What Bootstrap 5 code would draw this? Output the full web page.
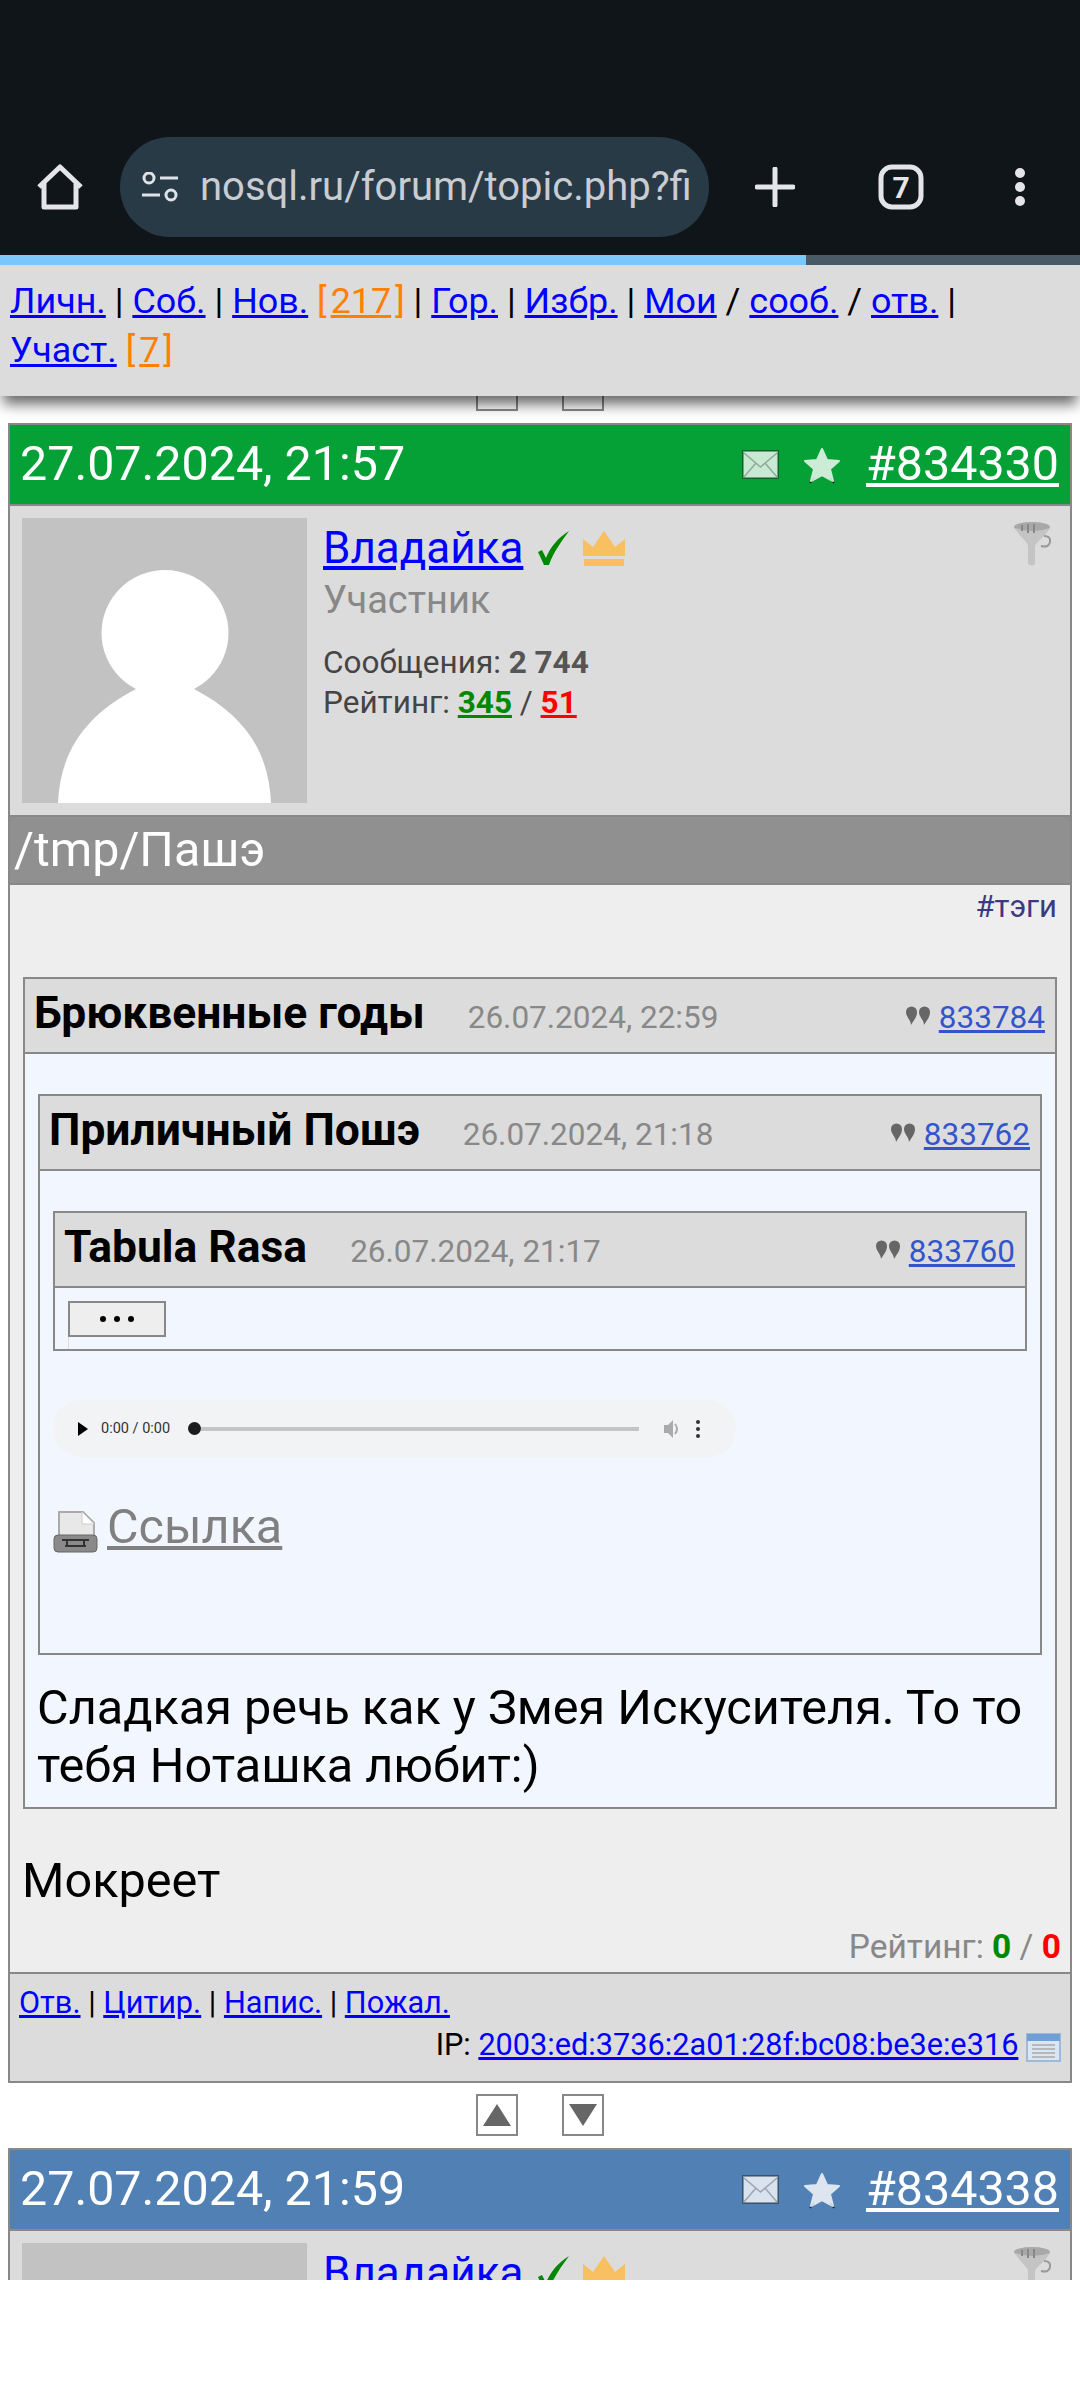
<!DOCTYPE html>
<html lang="ru">
<head>
  <meta charset="UTF-8">
  <title>nosql.ru forum</title>
  <link href="https://cdn.jsdelivr.net/npm/bootstrap@5.3.2/dist/css/bootstrap.min.css" rel="stylesheet">
  <style>
    body { background: #fff; font-family: Roboto, "Liberation Sans", sans-serif; color: #000; }
    a { color: #00f; }
    .page-clip { height: 2280px; overflow: hidden; }

    .chrome-bar { height: 255px; background: #0f1518; padding: 137px 0 18px 37px; }
    .url-pill { width: 589px; height: 100px; margin-left: 37px; background: #293a47; border-radius: 50px; padding: 0 19px 0 22px; color: #c9cdd2; font-size: 40px; flex: none; }
    .url-text { white-space: nowrap; overflow: hidden; width: 490px; margin-left: 22px; }
    .plus-gap { margin-left: 46px; }
    .tabs-gap { margin-left: 83px; }
    .dots-gap { margin-left: 90px; }
    .load-track { height: 10px; background: #4b5a67; }
    .load-fill { width: 806px; height: 10px; background: #7cc8fc; }

    .top-nav { position: relative; z-index: 5; background: #dcdcdc; font-size: 35.9px; line-height: 49px; padding: 12px 10px 21px; box-shadow: 0 11px 13px -3px rgba(0,0,0,.6); }
    .top-nav span { color: #ff8000; }
    .top-nav span a { color: #ff8000; margin: 0 4px; }

    .arrow-row { gap: 44px; margin: 11px 0 12px; }
    .arrow-row.first-row { margin-top: -27px; }
    .arrow-btn { width: 42px; height: 42px; border: 2px solid #888; background: #fff; }

    .post-box { margin: 0 8px; border: 2px solid #888; }
    .post-head { height: 81px; border-bottom: 2px solid #888; color: #fff; font-size: 48.4px; padding: 0 11px 0 10px; }
    .post-head a { color: #fff; margin-left: 25px; }
    .head-green { background: #05a036; }
    .head-blue { background: #5080b4; }
    .post-author { height: 311px; background: #dcdcdc; border-bottom: 2px solid #888; padding: 12px; position: relative; }
    .author-info { margin-left: 16px; }
    .author-name { font-size: 44px; line-height: 50px; margin-top: 5px; }
    .tick-icon { margin-left: 6px; }
    .crown-icon { margin-left: 3px; }
    .author-role { font-size: 38px; line-height: 46px; color: #888; margin-top: 4px; margin-bottom: 20px; }
    .author-stat { font-size: 31.5px; line-height: 40px; color: #444; }
    .author-stat b { color: #555; }
    .rate-up { color: #080; font-weight: 700; }
    .rate-down { color: #f00; font-weight: 700; }
    .funnel-icon { position: absolute; right: 18px; top: 16px; }
    .post-subject { line-height: 66px; background: #909090; border-bottom: 2px solid #888; color: #fff; font-size: 48.4px; padding-left: 4px; box-sizing: content-box; height: 66px; }
    .post-text { background: #eee; border-bottom: 2px solid #888; padding: 4px 13px 5px; }
    .tag-line { text-align: right; font-size: 31px; line-height: 36px; margin-bottom: 52px; color: #3a3a80; }
    .body-line { font-size: 48.6px; line-height: 58px; margin: 43px 0 0 -1px; }
    .rate-line { text-align: right; font-size: 33.5px; line-height: 40px; color: #888; margin: 17px -4px 0 0; }

    .quote-box { border: 2px solid #888; background: #f2f7ff; }
    .quote-head { height: 75px; background: #dcdcdc; border-bottom: 2px solid #888; padding: 8px 10px 0 9px; line-height: 1.2; }
    .quote-name { font-size: 44.4px; font-weight: 700; margin-right: 43px; }
    .quote-date { font-size: 31.5px; color: #888; }
    .quote-ref { font-size: 31.5px; color: #3355cc; margin-left: 8px; }
    .quote-sign { margin-left: auto; align-self: center; margin-top: -4px; }
    .quote-pad { padding: 40px 13px 0; }
    .quote-cut { height: 61px; overflow: hidden; padding: 13px 13px 0; }
    .more-btn { width: 98px; height: 36px; border: 2px solid #888; background: #eee; gap: 8px; }
    .more-btn i { width: 6px; height: 6px; border-radius: 50%; background: #000; }
    .more-tail { width: 1px; height: 12px; background: #ddd; }

    .audio-bar { width: 683px; height: 57px; margin-top: 49px; background: #f1f3f4; border-radius: 29px; padding: 0 26px 0 24px; }
    .audio-time { font-size: 14.5px; color: #333; margin: 0 18px 0 12px; white-space: nowrap; }
    .audio-thumb { width: 13px; height: 13px; border-radius: 50%; background: #1c1c1c; flex: none; }
    .audio-track { width: 438px; height: 4px; background: #c4c4c4; margin-right: 25px; flex: none; }
    .file-link { font-size: 48.5px; line-height: 56px; margin-top: 42px; padding-bottom: 98px; }
    .file-link a { color: #808080; margin-left: 9px; }
    .file-link svg { vertical-align: -10px; }
    .quote-tail { font-size: 48.6px; line-height: 58px; padding: 24px 0 12px; margin: 0 -10px 0 -1px; }

    .post-foot { background: #dcdcdc; font-size: 30.7px; line-height: 42px; padding: 8px 9px 15px; }
    .ip-line { text-align: right; }
    .ip-line svg { vertical-align: -7px; }
  </style>
</head>
<body>

<svg width="0" height="0" class="d-block">
  <defs>
    <symbol id="ic-mail" viewBox="0 0 37 29">
      <rect x="1" y="1" width="35" height="27" fill="#fff" fill-opacity=".78" stroke="#000" stroke-opacity=".35" stroke-width="2"/>
      <path d="M2 3 18.500 17 35 3M2 27 14 13M35 27 23 13" fill="none" stroke="#000" stroke-opacity=".28" stroke-width="1.500"/>
    </symbol>
    <symbol id="ic-star" viewBox="0 0 38 38">
      <path d="M7 37 11 32M31 37 27 32" stroke="#000" stroke-opacity=".7" stroke-width="2"/>
      <path d="M19 3 24 14 36 15 27 23 30 35 19 29 8 35 11 23 2 15 14 14Z" fill="#fff" stroke="#fff" stroke-width="2" stroke-linejoin="round" opacity=".8"/>
    </symbol>
    <symbol id="ic-funnel" viewBox="0 0 38 44">
      <ellipse cx="18" cy="5" rx="18" ry="5" fill="#a8a8a8"/>
      <path d="M1 6C6 16 13 19 14 24V42Q18 45 21 42V24C23 19 30 16 36 6Q18 12 1 6Z" fill="#c4c4c4"/>
      <path d="M8 3V9M14 2V11M20 2V11" stroke="#888" stroke-width="2"/>
      <path d="M30 14Q37 14 36 20 35 26 27 24" fill="none" stroke="#999" stroke-width="2"/>
    </symbol>
    <symbol id="ic-avatar" viewBox="0 0 285 285">
      <rect width="285" height="285" fill="#c2c2c2"/>
      <path d="M36 285C38 235 62 198 114 171H172C224 198 247 235 249 285Z" fill="#fff"/>
      <ellipse cx="143" cy="115" rx="63.500" ry="63" fill="#fff"/>
    </symbol>
    <symbol id="ic-check" viewBox="0 0 34 34">
      <path d="M1 21 5 19 9 27C13 16 22 6 32 0 24 11 16 22 12 34H7Z" fill="#080"/>
    </symbol>
    <symbol id="ic-crown" viewBox="0 0 44 35">
      <path d="M1 8 11 16 22 0 33 16 43 8V25H1Z" fill="#f8c060"/>
      <rect x="2" y="28" width="40" height="7" fill="#f8c060"/>
    </symbol>
    <symbol id="ic-quote" viewBox="0 0 26 24">
      <path d="M0 22 14 2M6 24 20 4M12 24 26 4" stroke="#ddd" stroke-width="1.500"/>
      <path d="M1 6A5.500 5.500 0 0 1 12 6C12 11 9 14 6 19 6 14 1 11 1 6ZM14 6A5.500 5.500 0 0 1 25 6C25 11 22 14 19 19 19 14 14 11 14 6Z" fill="#666"/>
    </symbol>
  </defs>
</svg>

<div class="page-clip">

  <div class="chrome-bar d-flex align-items-center">
    <svg width="46" height="46" viewBox="0 0 46 46" fill="none" stroke="#e3e5e8" stroke-width="5" stroke-linejoin="round"><path d="M2 23 23 3 44 23M7 19V43H39V19"/></svg>
    <div class="url-pill d-flex align-items-center">
      <svg width="36" height="30" viewBox="0 0 36 30" fill="none" stroke="#dfe2e6" stroke-width="3"><circle cx="7" cy="6" r="5"/><path d="M18 6H36M0 23H18"/><circle cx="29" cy="23" r="5"/></svg>
      <div class="url-text">nosql.ru/forum/topic.php?fid=8&amp;tid=1</div>
    </div>
    <svg class="plus-gap" width="40" height="40" viewBox="0 0 40 40" stroke="#e3e5e8" stroke-width="5" stroke-linecap="round"><path d="M20 2V38M2 20H38"/></svg>
    <svg class="tabs-gap" width="46" height="46" viewBox="0 0 46 46"><rect x="3" y="3" width="40" height="40" rx="11" fill="none" stroke="#e3e5e8" stroke-width="5"/><text x="23" y="34" text-anchor="middle" font-family="Roboto" font-weight="700" font-size="30" fill="#e3e5e8">7</text></svg>
    <svg class="dots-gap" width="12" height="40" viewBox="0 0 12 40" fill="#e3e5e8"><circle cx="6" cy="6" r="5"/><circle cx="6" cy="20" r="5"/><circle cx="6" cy="34" r="5"/></svg>
  </div>
  <div class="load-track"><div class="load-fill"></div></div>

  <div class="top-nav">
    <a href="#">Личн.</a> | <a href="#">Соб.</a> | <a href="#">Нов.</a> <span>[<a href="#">217</a>]</span> | <a href="#">Гор.</a> | <a href="#">Избр.</a> | <a href="#">Мои</a> / <a href="#">сооб.</a> / <a href="#">отв.</a> |<br>
    <a href="#">Участ.</a> <span>[<a href="#">7</a>]</span>
  </div>

  <div class="arrow-row first-row d-flex justify-content-center">
    <div class="arrow-btn"></div>
    <div class="arrow-btn"></div>
  </div>

  <div class="post-box">
    <div class="post-head head-green d-flex align-items-center">
      <div class="me-auto">27.07.2024, 21:57</div>
      <svg class="me-4" width="37" height="29"><use href="#ic-mail"/></svg>
      <svg width="38" height="38"><use href="#ic-star"/></svg>
      <a href="#">#834330</a>
    </div>
    <div class="post-author d-flex">
      <svg width="285" height="285" class="flex-shrink-0"><use href="#ic-avatar"/></svg>
      <div class="author-info">
        <div class="author-name d-flex align-items-center gap-2"><a href="#">Владайка</a>
          <svg class="tick-icon" width="34" height="34"><use href="#ic-check"/></svg>
          <svg class="crown-icon" width="44" height="35"><use href="#ic-crown"/></svg></div>
        <div class="author-role">Участник</div>
        <div class="author-stat">Сообщения: <b>2 744</b></div>
        <div class="author-stat">Рейтинг: <a class="rate-up" href="#">345</a> / <a class="rate-down" href="#">51</a></div>
      </div>
      <svg class="funnel-icon" width="38" height="44"><use href="#ic-funnel"/></svg>
    </div>
    <div class="post-subject">/tmp/Пашэ</div>
    <div class="post-text">
      <div class="tag-line">#тэги</div>

      <div class="quote-box">
        <div class="quote-head d-flex align-items-baseline">
          <span class="quote-name">Брюквенные годы</span><span class="quote-date">26.07.2024, 22:59</span>
          <svg class="quote-sign" width="26" height="24"><use href="#ic-quote"/></svg><a class="quote-ref" href="#">833784</a>
        </div>
        <div class="quote-pad">
          <div class="quote-box">
            <div class="quote-head d-flex align-items-baseline">
              <span class="quote-name">Приличный Пошэ</span><span class="quote-date">26.07.2024, 21:18</span>
              <svg class="quote-sign" width="26" height="24"><use href="#ic-quote"/></svg><a class="quote-ref" href="#">833762</a>
            </div>
            <div class="quote-pad">
              <div class="quote-box">
                <div class="quote-head d-flex align-items-baseline">
                  <span class="quote-name">Tabula Rasa</span><span class="quote-date">26.07.2024, 21:17</span>
                  <svg class="quote-sign" width="26" height="24"><use href="#ic-quote"/></svg><a class="quote-ref" href="#">833760</a>
                </div>
                <div class="quote-cut">
                  <div class="more-btn d-flex align-items-center justify-content-center"><i></i><i></i><i></i></div>
                  <div class="more-tail"></div>
                </div>
              </div>
              <div class="audio-bar d-flex align-items-center">
                <svg width="12" height="14" viewBox="0 0 12 14" class="flex-shrink-0"><path d="M1 0 11 7 1 14Z" fill="#000"/></svg>
                <span class="audio-time">0:00 / 0:00</span>
                <span class="audio-thumb"></span>
                <span class="audio-track"></span>
                <svg width="16" height="20" viewBox="0 0 16 20" fill="#aaa" class="flex-shrink-0"><path d="M0 6H4L9 1V19L4 14H0Z"/><path d="M11 5Q15 10 11 15" fill="none" stroke="#aaa" stroke-width="2"/></svg>
                <svg width="4" height="18" viewBox="0 0 4 18" fill="#333" class="ms-3 flex-shrink-0"><circle cx="2" cy="2" r="2"/><circle cx="2" cy="9" r="2"/><circle cx="2" cy="16" r="2"/></svg>
              </div>
              <div class="file-link">
                <svg width="45" height="42" viewBox="0 0 45 42"><path d="M6 1H30L41 12V32H6Z" fill="#e8e8e8" stroke="#aaa" stroke-width="2"/><path d="M29 1V13H41" fill="#fff" stroke="#ccc"/><rect x="1" y="24" width="43" height="17" rx="4" fill="#8a8a8a" stroke="#666"/><path d="M9 29H36M12 35H33M14 29V35M31 29V35" stroke="#333" stroke-width="2" fill="none"/></svg><a href="#">Ссылка</a>
              </div>
            </div>
          </div>
          <div class="quote-tail">Сладкая речь как у Змея Искусителя. То то тебя Ноташка любит:)</div>
        </div>
      </div>

      <div class="body-line">Мокреет</div>
      <div class="rate-line">Рейтинг: <span class="rate-up">0</span> / <span class="rate-down">0</span></div>
    </div>
    <div class="post-foot">
      <div><a href="#">Отв.</a> | <a href="#">Цитир.</a> | <a href="#">Напис.</a> | <a href="#">Пожал.</a></div>
      <div class="ip-line">IP: <a href="#">2003:ed:3736:2a01:28f:bc08:be3e:e316</a>
        <svg width="35" height="29" viewBox="0 0 35 29"><rect x="1" y="1" width="33" height="27" fill="#dbe6f2" stroke="#9dbad8" stroke-width="2"/><rect x="1" y="1" width="33" height="7" fill="#6f9fd4"/><path d="M6 12H29M6 16H29M6 20H29M6 24H29" stroke="#aaa" stroke-width="1.500"/></svg>
      </div>
    </div>
  </div>

  <div class="arrow-row d-flex justify-content-center">
    <div class="arrow-btn d-flex align-items-center justify-content-center"><svg width="28" height="26" viewBox="0 0 28 26"><path d="M14 2 28 24H0Z" fill="#666"/></svg></div>
    <div class="arrow-btn d-flex align-items-center justify-content-center"><svg width="28" height="26" viewBox="0 0 28 26"><path d="M0 2H28L14 24Z" fill="#666"/></svg></div>
  </div>

  <div class="post-box">
    <div class="post-head head-blue d-flex align-items-center">
      <div class="me-auto">27.07.2024, 21:59</div>
      <svg class="me-4" width="37" height="29"><use href="#ic-mail"/></svg>
      <svg width="38" height="38"><use href="#ic-star"/></svg>
      <a href="#">#834338</a>
    </div>
    <div class="post-author d-flex">
      <svg width="285" height="285" class="flex-shrink-0"><use href="#ic-avatar"/></svg>
      <div class="author-info">
        <div class="author-name d-flex align-items-center gap-2"><a href="#">Владайка</a>
          <svg class="tick-icon" width="34" height="34"><use href="#ic-check"/></svg>
          <svg class="crown-icon" width="44" height="35"><use href="#ic-crown"/></svg></div>
      </div>
      <svg class="funnel-icon" width="38" height="44"><use href="#ic-funnel"/></svg>
    </div>
  </div>
</div>

<script src="https://cdn.jsdelivr.net/npm/bootstrap@5.3.2/dist/js/bootstrap.bundle.min.js"></script>
</body>
</html>
